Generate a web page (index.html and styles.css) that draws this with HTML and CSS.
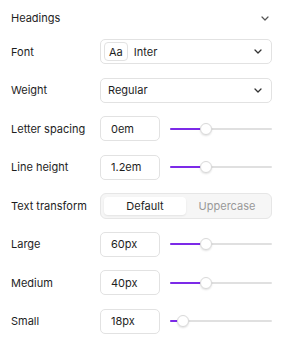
FILE: index.html
```html
<!DOCTYPE html>
<html>
<head>
<meta charset="utf-8">
<link rel="stylesheet" href="styles.css">
</head>
<body>
<div class="panel">
  <div class="header">
    <span class="title">Headings</span>
    <svg class="chev" width="8" height="5" viewBox="0 0 8 5"><path d="M1 1l3 3 3-3" fill="none" stroke="#555" stroke-width="1.2" stroke-linecap="round" stroke-linejoin="round"/></svg>
  </div>
  <div class="rows">
    <div class="row">
      <span class="label">Font</span>
      <div class="select">
        <span class="aa">Aa</span>
        <span class="value">Inter</span>
        <svg class="chev" width="8" height="5" viewBox="0 0 8 5"><path d="M1 1l3 3 3-3" fill="none" stroke="#333" stroke-width="1.3" stroke-linecap="round" stroke-linejoin="round"/></svg>
      </div>
    </div>
    <div class="row">
      <span class="label">Weight</span>
      <div class="select">
        <span class="value plain">Regular</span>
        <svg class="chev" width="8" height="5" viewBox="0 0 8 5"><path d="M1 1l3 3 3-3" fill="none" stroke="#333" stroke-width="1.3" stroke-linecap="round" stroke-linejoin="round"/></svg>
      </div>
    </div>
    <div class="row">
      <span class="label">Letter spacing</span>
      <div class="num">0em</div>
      <div class="slider"><div class="fill" style="width:36px"></div><div class="thumb" style="left:36px"></div></div>
    </div>
    <div class="row">
      <span class="label">Line height</span>
      <div class="num">1.2em</div>
      <div class="slider"><div class="fill" style="width:36px"></div><div class="thumb" style="left:36px"></div></div>
    </div>
    <div class="row">
      <span class="label">Text transform</span>
      <div class="segmented">
        <span class="seg active">Default</span>
        <span class="seg">Uppercase</span>
      </div>
    </div>
    <div class="row">
      <span class="label">Large</span>
      <div class="num">60px</div>
      <div class="slider"><div class="fill" style="width:36px"></div><div class="thumb" style="left:36px"></div></div>
    </div>
    <div class="row">
      <span class="label">Medium</span>
      <div class="num">40px</div>
      <div class="slider"><div class="fill" style="width:36px"></div><div class="thumb" style="left:36px"></div></div>
    </div>
    <div class="row">
      <span class="label">Small</span>
      <div class="num">18px</div>
      <div class="slider"><div class="fill" style="width:9px"></div><div class="thumb" style="left:13px"></div></div>
    </div>
  </div>
</div>
</body>
</html>
```

FILE: styles.css
```css
* { box-sizing: border-box; }
html, body { margin: 0; padding: 0; background: #fff; }
body {
  font-family: Inter, "Liberation Sans", sans-serif;
  font-size: 11px;
  color: #1e1e1e;
  width: 284px;
  height: 341px;
  overflow: hidden;
}
.panel { padding: 0 12px 0 11px; }
.header {
  height: 36px;
  display: flex;
  align-items: center;
  justify-content: space-between;
  padding-right: 3px;
}
.title { font-size: 11px; }
.rows {
  margin-top: 3px;
  display: flex;
  flex-direction: column;
  gap: 13.5px;
}
.row {
  display: flex;
  align-items: center;
  height: 25px;
}
.label { width: 89px; flex: none; }
.select {
  flex: 1;
  height: 25px;
  border: 1px solid #e2e2e2;
  border-radius: 5px;
  display: flex;
  align-items: center;
  padding: 0 9px 0 3px;
}
.aa {
  border: 1px solid #e2e2e2;
  border-radius: 4px;
  height: 19px;
  padding: 0 4px;
  display: flex;
  align-items: center;
  font-size: 11px;
  margin-right: 6px;
}
.value { flex: 1; }
.value.plain { padding-left: 4px; }
.num {
  width: 60px;
  height: 25px;
  flex: none;
  border: 1px solid #e2e2e2;
  border-radius: 5px;
  display: flex;
  align-items: center;
  padding-left: 10px;
}
.slider {
  position: relative;
  flex: 1;
  margin-left: 10px;
  height: 2px;
  background: #e0e0e0;
  border-radius: 1px;
}
.fill {
  height: 2px;
  background: #7c2ae8;
  border-radius: 1px;
}
.thumb {
  position: absolute;
  top: -5px;
  width: 12px;
  height: 12px;
  margin-left: -6px;
  border-radius: 50%;
  background: #fff;
  border: 1px solid #dadada;
  box-shadow: 0 1px 2px rgba(0,0,0,0.12);
}
.segmented {
  flex: 1;
  height: 26px;
  background: #f6f6f6;
  border: 1px solid #e6e6e6;
  border-radius: 6px;
  padding: 3px;
  display: flex;
}
.seg {
  flex: 1;
  display: flex;
  align-items: center;
  justify-content: center;
  color: #999;
  border-radius: 4px;
}
.seg.active {
  background: #fff;
  color: #1e1e1e;
  box-shadow: 0 1px 2px rgba(0,0,0,0.08);
}
```
